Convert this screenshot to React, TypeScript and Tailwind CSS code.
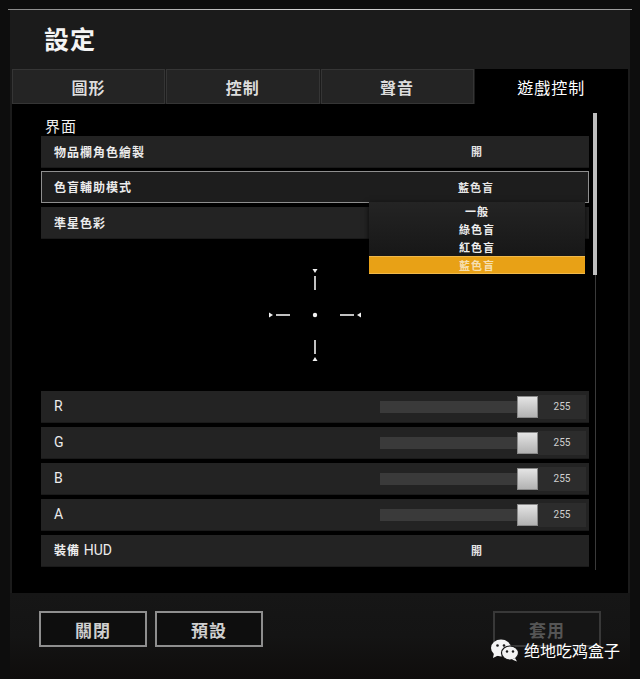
import React from "react";

const font = { fontFamily: '"Noto Sans CJK TC", "Noto Sans", sans-serif' };

const Crosshair = () => (
  <svg width="100" height="100" viewBox="0 0 100 100">
    <g stroke="#f2f2f2" strokeWidth="1.6">
      <line x1="50" y1="11" x2="50" y2="25" />
      <line x1="50" y1="75" x2="50" y2="89" />
      <line x1="11" y1="50" x2="25" y2="50" />
      <line x1="75" y1="50" x2="89" y2="50" />
    </g>
    <g fill="#f2f2f2">
      <circle cx="50" cy="50" r="2.2" />
      <polygon points="47.5,4 52.5,4 50,8" />
      <polygon points="47.5,96 52.5,96 50,92" />
      <polygon points="4,47.5 4,52.5 8,50" />
      <polygon points="96,47.5 96,52.5 92,50" />
    </g>
  </svg>
);

const WeChat = () => (
  <svg width="30" height="24" viewBox="0 0 30 24">
    <ellipse cx="11" cy="10" rx="10" ry="8.5" fill="#f4f4f4" />
    <polygon points="4,15 3,20 9,17" fill="#f4f4f4" />
    <circle cx="7.5" cy="7.5" r="1.3" fill="#1a1a1a" />
    <circle cx="14" cy="7.5" r="1.3" fill="#1a1a1a" />
    <ellipse cx="20" cy="15" rx="8.5" ry="7" fill="#f4f4f4" stroke="#151515" strokeWidth="1.2" />
    <polygon points="25,20 27,23.5 22,21.5" fill="#f4f4f4" />
    <circle cx="17" cy="13.5" r="1.2" fill="#1a1a1a" />
    <circle cx="23" cy="13.5" r="1.2" fill="#1a1a1a" />
  </svg>
);

const tabs = ["圖形", "控制", "聲音", "遊戲控制"];
const options = ["一般", "綠色盲", "紅色盲", "藍色盲"];
const channels = ["R", "G", "B", "A"];

const Row = ({
  label,
  value,
  selected,
  children,
}: {
  label: React.ReactNode;
  value?: string;
  selected?: boolean;
  children?: React.ReactNode;
}) => (
  <div
    className={`relative h-[32px] flex items-center ${
      selected ? "bg-[#1d1d1d] border border-[#8f8f8f]" : "bg-[#232323] border-b border-[#1a1a1a]"
    }`}>
    <span className={`${selected ? "pl-[12px]" : "pl-[13px]"} text-[12px] font-bold tracking-[1px] text-[#ececec]`}>
      {label}
    </span>
    {value && (
      <span className="ml-auto mr-[4px] w-[216px] text-center text-[11px] font-bold tracking-[1px] text-[#e6e6e6]">
        {value}
      </span>
    )}
    {children}
  </div>
);

const SliderRow = ({ label, value }: { label: string; value: number }) => (
  <div className="h-[32px] flex items-center bg-[#232323] border-b border-[#1a1a1a]">
    <span
      className="flex-1 pl-[13px] text-[14px] text-[#ececec]"
      style={{ fontFamily: '"Roboto", "Noto Sans", sans-serif' }}>
      {label}
    </span>
    <div className="w-[137px] h-[12px] bg-[#3a3a3a]" />
    <div className="w-[21px] h-[22px] bg-gradient-to-b from-[#e4e4e4] to-[#b2b2b2] border border-[#8a8a8a]" />
    <div
      className="mr-[3px] w-[48px] h-[24px] bg-[#2c2c2c] flex items-center justify-center text-[10px] text-[#d0d0d0]"
      style={{ fontFamily: '"Roboto", sans-serif' }}>
      {value}
    </div>
  </div>
);

export default function App() {
  return (
    <div className="relative w-[640px] h-[679px] bg-[#0d0d0d] overflow-hidden text-white" style={font}>
      <div className="h-[9px]" />
      <div className="mx-[8px] h-px bg-gradient-to-r from-[#888] via-[#d8d8d8] to-[#999]" />
      <div className="ml-[10px] w-[620px] bg-[#1b1b1b]">
        {/* header */}
        <div className="h-[58px] pl-[34px] flex items-center">
          <h1 className="text-[25px] font-bold tracking-[1px] text-[#f4f4f4]">設定</h1>
        </div>

        {/* tabs */}
        <div className="mt-px px-[2px] h-[35px] grid grid-cols-4 gap-px">
          {tabs.map((t, i) =>
            i === 3 ? (
              <div key={t} className="bg-black flex items-center justify-center text-[16px] tracking-[1px] text-white">
                {t}
              </div>
            ) : (
              <div
                key={t}
                className="bg-[#242424] border border-[#353535] flex items-center justify-center text-[16px] font-bold tracking-[1px] text-[#dcdcdc]">
                {t}
              </div>
            )
          )}
        </div>

        {/* content */}
        <div className="mx-[2px] h-[489px] bg-black flex pl-[29px]">
          <div className="w-[548px] pt-[11px]">
            <div className="h-[21px] pl-[4px] text-[15px] leading-[21px] tracking-[1px] text-[#f0f0f0]">界面</div>
            <Row label="物品欄角色繪製" value="開" />
            <div className="mt-[3px]">
              <Row label="色盲輔助模式" value="藍色盲" selected>
                <div className="absolute top-full left-[327px] w-[216px] z-10 bg-gradient-to-b from-[#242424] to-[#131313] shadow-[0_2px_6px_rgba(0,0,0,0.8)]">
                  {options.map((o, i) => (
                    <div
                      key={o}
                      className={`h-[18px] flex items-center justify-center text-[11px] font-bold tracking-[1px] ${
                        i === 3 ? "bg-[#e8a116] text-[#f6dfb0] border-y border-[#f0b84a]" : "text-[#ededed]"
                      }`}>
                      {o}
                    </div>
                  ))}
                </div>
              </Row>
            </div>
            <div className="mt-[4px]">
              <Row label="準星色彩" />
            </div>

            <div className="h-[152px] flex items-center justify-center">
              <Crosshair />
            </div>

            <div className="flex flex-col gap-[4px]">
              {channels.map((c) => (
                <SliderRow key={c} label={c} value={255} />
              ))}
              <Row
                label={
                  <>
                    裝備{" "}
                    <span className="font-normal tracking-normal text-[14px]" style={{ fontFamily: '"Roboto", sans-serif' }}>
                      HUD
                    </span>
                  </>
                }
                value="開"
              />
            </div>
          </div>

          {/* scrollbar */}
          <div className="ml-[4px] mt-[9px] w-[4px] flex flex-col items-center">
            <div className="w-[4px] h-[162px] bg-[#bebebe]" />
            <div className="w-px h-[295px] bg-[#3a3a3a]" />
          </div>
        </div>

        {/* footer */}
        <div className="h-[86px] bg-gradient-to-b from-[#161616] via-[#141414] to-[#0f0d0c] pt-[18px] px-[29px] flex items-start gap-[8px]">
          <button className="w-[108px] h-[36px] bg-[#0e0e0e] border-2 border-[#8e8e8e] text-[17px] leading-none font-bold tracking-[1px] text-[#cfcfcf]">
            關閉
          </button>
          <button className="w-[108px] h-[36px] bg-[#0e0e0e] border-2 border-[#8e8e8e] text-[17px] leading-none font-bold tracking-[1px] text-[#cfcfcf]">
            預設
          </button>
          <button className="ml-auto w-[108px] h-[36px] bg-[#151515] border-2 border-[#383838] text-[17px] leading-none font-bold tracking-[1px] text-[#555]">
            套用
          </button>
        </div>
      </div>

      {/* watermark */}
      <div className="absolute left-[490px] top-[638px] flex items-center gap-[4px]">
        <WeChat />
        <span
          className="text-[16px] leading-none text-white"
          style={{ fontFamily: '"Noto Sans CJK SC", "Noto Sans", sans-serif' }}>
          绝地吃鸡盒子
        </span>
      </div>
    </div>
  );
}
